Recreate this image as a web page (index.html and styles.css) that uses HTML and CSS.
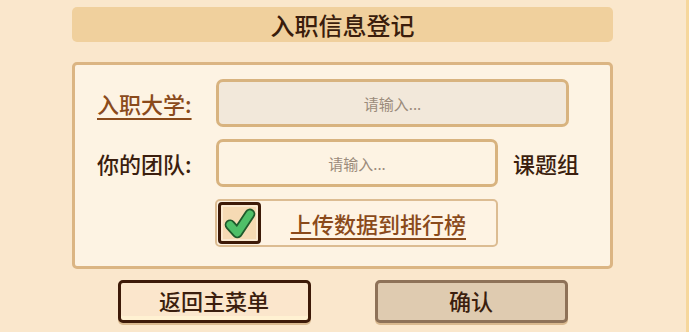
FILE: index.html
```html
<!DOCTYPE html>
<html lang="zh-CN">
<head>
  <meta charset="UTF-8" />
  <meta name="viewport" content="width=device-width, initial-scale=1.0"/>
  <title>入职信息登记</title>
  <link rel="stylesheet" href="styles.css">
</head>
<body>

  <div class="dialog">
    <div class="title-bar">入职信息登记</div>

    <div class="panel">
      <div class="form-row">
        <span class="label link">入职大学:</span>
        <input type="text" class="field field-school" placeholder="请输入..." />
      </div>

      <div class="form-row">
        <span class="label">你的团队:</span>
        <input type="text" class="field field-team" placeholder="请输入..." />
        <span class="suffix">课题组</span>
      </div>

      <div class="form-row">
        <span class="label"></span>
        <label class="upload-box">
          <span class="check">
            <svg viewBox="0 0 40 40" width="36" height="36">
              <path d="M9 22 L17 31 L31 10" fill="none" stroke="#1f5a2c" stroke-width="12" stroke-linecap="round" stroke-linejoin="round"/>
              <path d="M9 22 L17 31 L31 10" fill="none" stroke="#4fbf68" stroke-width="8" stroke-linecap="round" stroke-linejoin="round"/>
            </svg>
          </span>
          <span class="upload-text">上传数据到排行榜</span>
        </label>
      </div>
    </div>

    <div class="actions">
      <button class="btn btn-back">返回主菜单</button>
      <button class="btn btn-ok">确认</button>
    </div>
  </div>

</body>
</html>
```

FILE: styles.css
```css
body {
  margin: 0;
  height: 332px;
  background-color: #fae7cc;
  font-family: "Noto Sans CJK SC", "Noto Sans", sans-serif;
  font-weight: 500;
  color: #3b1e0e;
  box-shadow: inset -3px 0 0 #f6d79c;
}

.dialog {
  width: 541px;
  margin-left: 72px;
  padding-top: 7px;
}

.title-bar {
  height: 35px;
  background: #f0d09d;
  border-radius: 5px;
  text-align: center;
  font-size: 24px;
  line-height: 35px;
  color: #3a1d0c;
}

.panel {
  margin-top: 20px;
  height: 187px;
  background: #fdf3e3;
  border: 3px solid #dbb583;
  border-radius: 5px;
  padding: 14px 0 0 22px;
}

.form-row {
  display: flex;
  align-items: center;
  margin-bottom: 12px;
}

.label {
  width: 119px;
  flex-shrink: 0;
  font-size: 22px;
}

.link {
  color: #8a4a1b;
  text-decoration: underline;
  text-underline-offset: 5px;
  text-decoration-thickness: 2px;
}

.field {
  height: 48px;
  box-sizing: border-box;
  border: 3px solid #d8b37f;
  border-radius: 7px;
  background: #fdf3e3;
  font-family: inherit;
  font-size: 15px;
  font-weight: 400;
  text-align: center;
  color: #3b1e0e;
  outline: none;
}

.field::placeholder {
  color: #9b8b7b;
}

.field-school {
  width: 353px;
  background: #f2e8da;
}

.field-team {
  width: 282px;
}

.suffix {
  margin-left: 15px;
  font-size: 22px;
}

.upload-box {
  width: 283px;
  height: 48px;
  box-sizing: border-box;
  margin-left: -1px;
  border: 2px solid #dcbc92;
  border-radius: 5px;
  background: #fef3e3;
  display: flex;
  align-items: center;
  padding-left: 1px;
}

.check {
  width: 43px;
  height: 42px;
  box-sizing: border-box;
  border: 3px solid #3d1a08;
  border-radius: 4px;
  background: #f6dab4;
  box-shadow: inset 0 0 0 2px #fbe9d0;
  display: flex;
  align-items: center;
  justify-content: center;
}

.upload-text {
  margin-left: 29px;
  font-size: 22px;
  color: #8a4a1b;
  text-decoration: underline;
  text-underline-offset: 5px;
  text-decoration-thickness: 2px;
}

.actions {
  display: flex;
  justify-content: center;
  gap: 64px;
  margin-top: 11px;
}

.btn {
  width: 193px;
  height: 43px;
  padding: 0 0 3px;
  border-radius: 5px;
  font-family: inherit;
  font-size: 22px;
  font-weight: 500;
  color: #3b1e0e;
  cursor: pointer;
}

.btn-back {
  background: #fbe6cc;
  border: 3px solid #3d1a08;
  box-shadow: inset 0 -4px 0 #fff1d2, 0 2px 0 #d9b98f;
}

.btn-ok {
  background: #dfcbb0;
  border: 3px solid #8e7258;
  box-shadow: 0 2px 0 #d9b98f;
}
```
